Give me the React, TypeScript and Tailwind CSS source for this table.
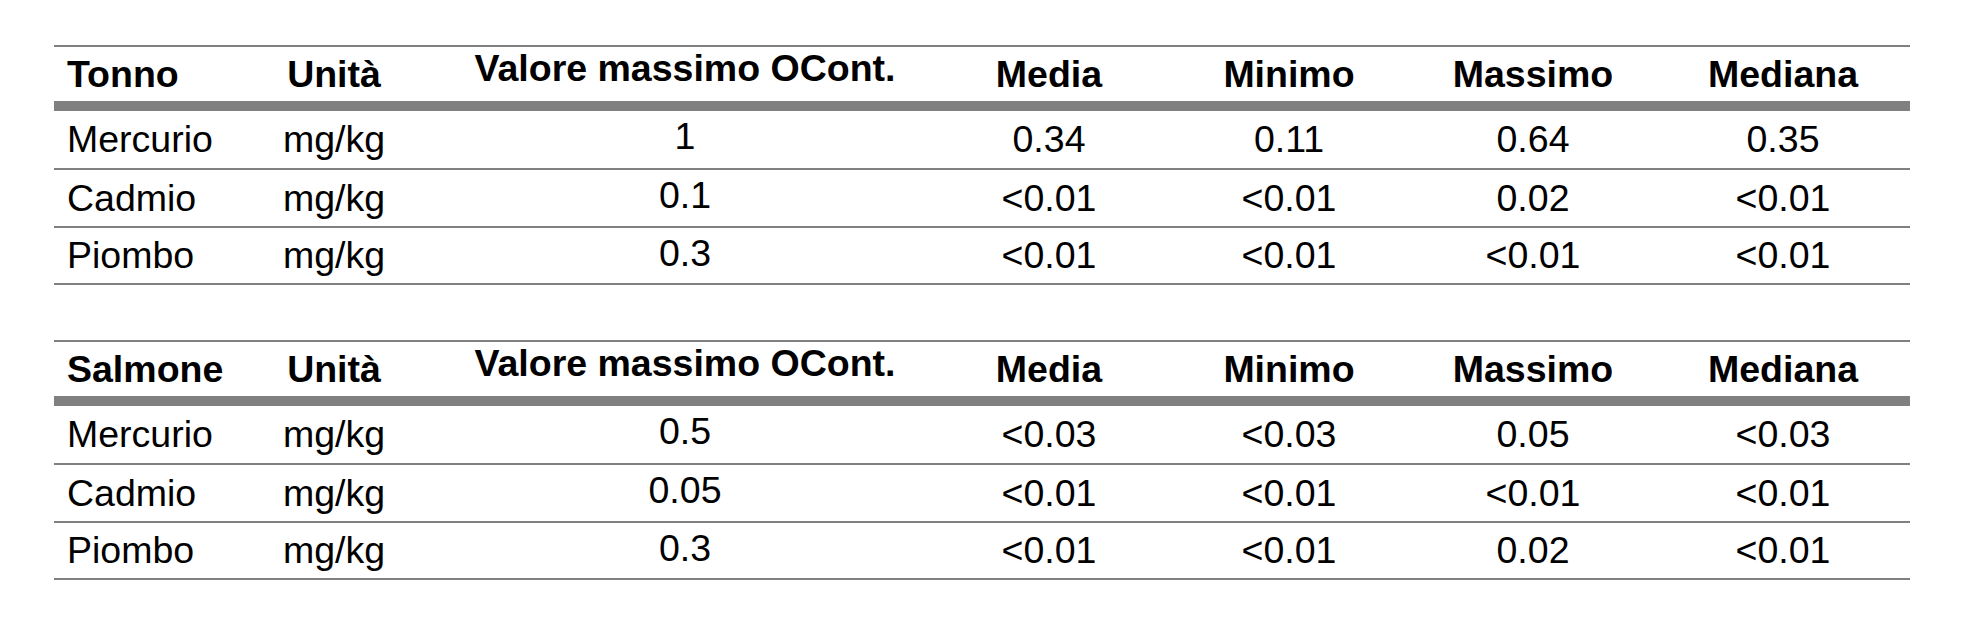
const tables = [
  {
    name: 'Tonno',
    rows: [
      ['Mercurio', 'mg/kg', '1', '0.34', '0.11', '0.64', '0.35'],
      ['Cadmio', 'mg/kg', '0.1', '<0.01', '<0.01', '0.02', '<0.01'],
      ['Piombo', 'mg/kg', '0.3', '<0.01', '<0.01', '<0.01', '<0.01'],
    ],
  },
  {
    name: 'Salmone',
    rows: [
      ['Mercurio', 'mg/kg', '0.5', '<0.03', '<0.03', '0.05', '<0.03'],
      ['Cadmio', 'mg/kg', '0.05', '<0.01', '<0.01', '<0.01', '<0.01'],
      ['Piombo', 'mg/kg', '0.3', '<0.01', '<0.01', '0.02', '<0.01'],
    ],
  },
];

const cols = 'grid grid-cols-[186px_188px_514px_214px_266px_222px_266px]';

function Cell({ i, value, head }: { i: number; value: string; head?: boolean }) {
  if (i === 0) return <div className="flex items-center pl-[13px]">{value}</div>;
  if (i === 2) return <div className={`text-center ${head ? 'pt-0' : 'pt-[4px]'}`}>{value}</div>;
  return (
    <div className={`flex items-center justify-center ${i === 6 ? 'pl-[12px]' : ''}`}>{value}</div>
  );
}

function MetalTable({ name, rows }: { name: string; rows: string[][] }) {
  const header = [name, 'Unità', 'Valore massimo OCont.', 'Media', 'Minimo', 'Massimo', 'Mediana'];
  return (
    <div className="w-[1856px] border-t-2 border-[#808080]">
      <div className={`${cols} h-[54px] font-bold border-b-[10px] border-[#808080] box-content`}>
        {header.map((h, i) => (
          <Cell key={i} i={i} value={h} head />
        ))}
      </div>
      {rows.map((r, ri) => (
        <div
          key={ri}
          className={`${cols} ${ri === 0 ? 'h-[57px]' : ri === 1 ? 'h-[56px]' : 'h-[55px]'} border-b-2 border-[#808080] box-content`}
        >
          {r.map((v, i) => (
            <Cell key={i} i={i} value={v} />
          ))}
        </div>
      ))}
    </div>
  );
}

export default function App() {
  return (
    <main className="w-[1980px] h-[623px] bg-white pt-[45px] pl-[54px] text-black text-[37.5px] leading-[43px] font-['Liberation_Sans',Arial,sans-serif]">
      <div className="flex flex-col gap-[55px]">
        {tables.map((t) => (
          <MetalTable key={t.name} name={t.name} rows={t.rows} />
        ))}
      </div>
    </main>
  );
}
